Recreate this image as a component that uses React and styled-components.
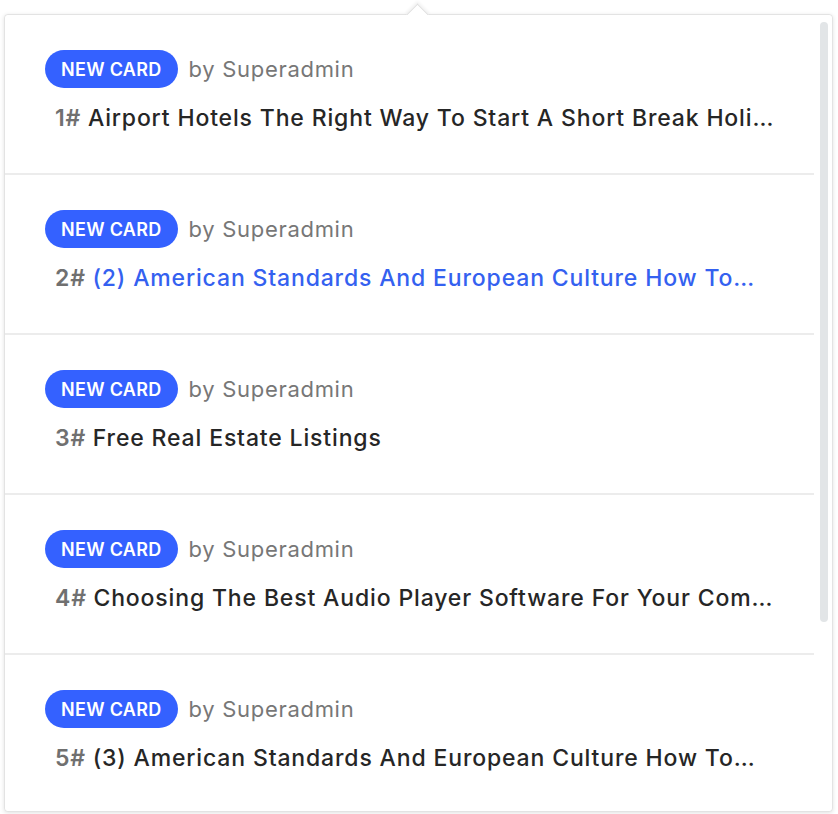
import React from 'react';
import styled, { createGlobalStyle } from 'styled-components';

const GlobalStyle = createGlobalStyle`
  body {
    margin: 0;
    background: #ffffff;
    font-family: Inter, "Noto Sans", sans-serif;
  }
`;

const Page = styled.div`
  padding: 14px 5px 2px 4px;
`;

// dropdown panel with the little caret on top
const Panel = styled.div`
  position: relative;
  height: 798px;
  box-sizing: border-box;
  border: 1px solid #e3e3e3;
  border-radius: 4px;
  background: #fff;
  box-shadow: 0 1px 4px rgba(0, 0, 0, 0.12);

  &::before {
    content: '';
    position: absolute;
    top: -8px;
    left: 404px;
    width: 16px;
    height: 16px;
    background: #fff;
    border-top: 1px solid #e0e0e0;
    border-left: 1px solid #e0e0e0;
    transform: rotate(45deg);
    box-shadow: -2px -2px 3px rgba(0, 0, 0, 0.05);
  }
`;

const List = styled.div`
  height: 100%;
  overflow: hidden;
  padding-right: 18px;
  border-radius: 4px;
  position: relative;
  background: #fff;
`;

const ScrollThumb = styled.div`
  position: absolute;
  top: 7px;
  right: 4px;
  width: 8px;
  height: 600px;
  border-radius: 4px;
  background: #e2e5e7;
`;

const Row = styled.div`
  display: flex;
  flex-direction: column;
  align-items: flex-start;
  gap: 15px;
  padding: 35px 20px 40px 40px;
  border-bottom: 2px solid #ececec;
`;

const Meta = styled.div`
  display: flex;
  align-items: center;
  gap: 11px;
`;

const Badge = styled.span`
  display: inline-flex;
  align-items: center;
  justify-content: center;
  height: 38px;
  padding: 0 16px;
  border-radius: 19px;
  background: #3461ff;
  color: #fff;
  font-size: 18px;
  font-weight: 600;
  letter-spacing: 0.3px;
`;

const Author = styled.span`
  color: #777;
  font-size: 22px;
  font-weight: 400;
  letter-spacing: 0.7px;
`;

const Title = styled.div`
  max-width: 100%;
  box-sizing: border-box;
  padding-left: 10px;
  line-height: 30px;
  font-size: 23px;
  font-weight: 500;
  letter-spacing: 0.85px;
  color: ${(p) => (p.$active ? '#3461f0' : '#262626')};
  white-space: nowrap;
  overflow: hidden;
  text-overflow: ellipsis;
`;

const Num = styled.span`
  color: #707070;
  font-weight: 600;
`;

const cards = [
  { n: 1, title: 'Airport Hotels The Right Way To Start A Short Break Holi…' },
  { n: 2, title: '(2) American Standards And European Culture How To…', active: true },
  { n: 3, title: 'Free Real Estate Listings' },
  { n: 4, title: 'Choosing The Best Audio Player Software For Your Com…' },
  { n: 5, title: '(3) American Standards And European Culture How To…' },
];

export default function App() {
  return (
    <>
      <GlobalStyle />
      <Page>
        <Panel>
          <List>
            {cards.map((c) => (
              <Row key={c.n}>
                <Meta>
                  <Badge>NEW CARD</Badge>
                  <Author>by Superadmin</Author>
                </Meta>
                <Title $active={c.active}>
                  <Num>{c.n}# </Num>
                  {c.title}
                </Title>
              </Row>
            ))}
          </List>
          <ScrollThumb />
        </Panel>
      </Page>
    </>
  );
}
